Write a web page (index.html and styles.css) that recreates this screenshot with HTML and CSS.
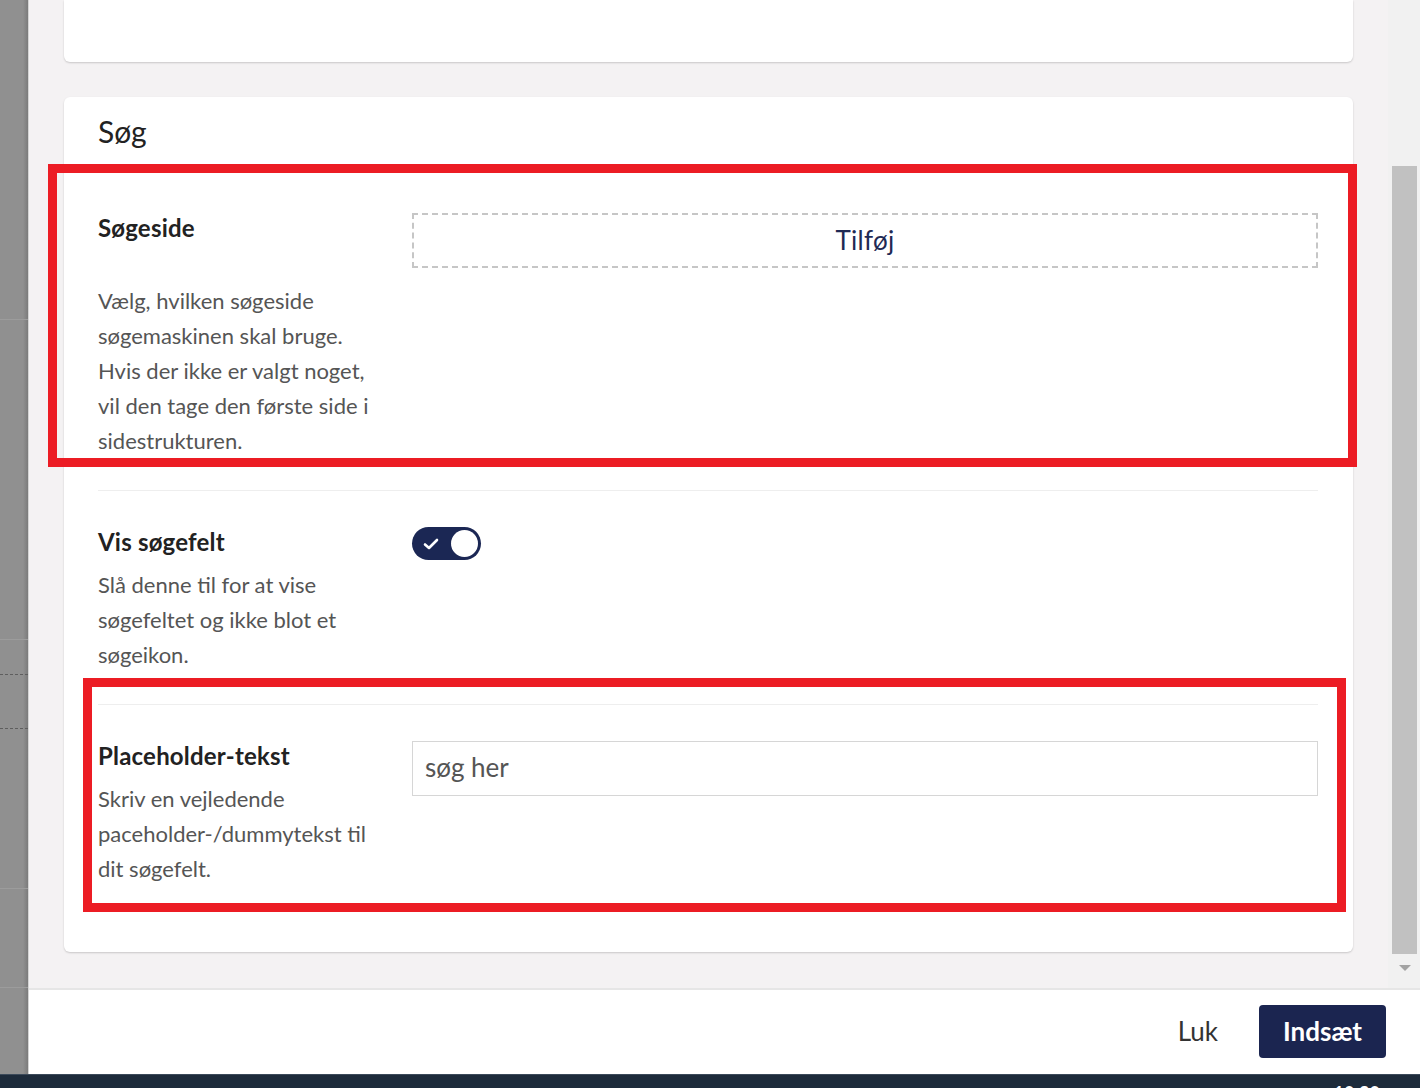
FILE: index.html
```html
<!DOCTYPE html>
<html lang="da">

<head>
    <meta charset="UTF-8">
    <meta name="viewport" content="width=device-width, initial-scale=1.0">
    <title>Søg – indstillinger</title>
    <link rel="stylesheet" href="styles.css">
</head>

<body>
    <div class="screen">
        <div class="backdrop">
            <div class="bd-block bd-1"></div>
            <div class="bd-block bd-2"></div>
            <div class="bd-block bd-3 dashed"></div>
            <div class="bd-block bd-4 dashed"></div>
            <div class="bd-block bd-5"></div>
            <div class="bd-block bd-6"></div>
        </div>

        <div class="modal">
            <div class="modal-body">
                <div class="scroll-area">
                    <div class="card card-top"></div>

                    <div class="card">
                        <h2>Søg</h2>

                        <div class="setting">
                            <div class="setting-info">
                                <div class="setting-label">Søgeside</div>
                                <p class="setting-help spaced">Vælg, hvilken søgeside søgemaskinen skal bruge. Hvis der ikke er valgt noget, vil den tage den første side i sidestrukturen.</p>
                            </div>
                            <div class="setting-control">
                                <button class="add-btn">Tilføj</button>
                            </div>
                        </div>

                        <div class="setting">
                            <div class="setting-info">
                                <div class="setting-label">Vis søgefelt</div>
                                <p class="setting-help">Slå denne til for at vise søgefeltet og ikke blot et søgeikon.</p>
                            </div>
                            <div class="setting-control">
                                <label class="toggle">
                                    <input type="checkbox" checked>
                                    <span class="toggle-track">
                                        <svg class="toggle-check" width="16" height="14" viewBox="0 0 16 14">
                                            <path d="M2 7.5 L6 11 L14 3" fill="none" stroke="#fff" stroke-width="2.6" stroke-linecap="round" stroke-linejoin="round"/>
                                        </svg>
                                        <span class="toggle-knob"></span>
                                    </span>
                                </label>
                            </div>
                        </div>

                        <div class="setting">
                            <div class="setting-info">
                                <div class="setting-label">Placeholder-tekst</div>
                                <p class="setting-help">Skriv en vejledende paceholder-/dummytekst til dit søgefelt.</p>
                            </div>
                            <div class="setting-control">
                                <input type="text" class="text-input" value="søg her">
                            </div>
                        </div>
                    </div>
                </div>

                <div class="scrollbar">
                    <div class="scroll-thumb"></div>
                    <div class="scroll-arrow"></div>
                </div>
            </div>

            <div class="modal-footer">
                <button class="btn-link">Luk</button>
                <button class="btn-primary">Indsæt</button>
            </div>
        </div>
    </div>

    <div class="taskbar">
        <span class="clock">10:30</span>
    </div>

    <!-- markeringer -->
    <div class="highlight highlight-1"></div>
    <div class="highlight highlight-2"></div>
</body>

</html>
```

FILE: styles.css
```css
body {
    margin: 0;
    height: 1088px;
    overflow: hidden;
    display: flex;
    flex-direction: column;
    font-family: Lato, "Open Sans", Arial, sans-serif;
    color: #222;
    position: relative;
}

.screen {
    flex: 1;
    display: flex;
    min-height: 0;
}

/* dimmed page behind the modal */
.backdrop {
    width: 28px;
    flex-shrink: 0;
    background: linear-gradient(to right, #909090 23px, #7b7b7b 28px);
    border-right: 1px solid #d4d4d4;
}

.bd-block {
    border-bottom: 1px solid #9c9c9c;
}

.bd-block.dashed {
    border-bottom: 1px dashed #5e5e5e;
}

.bd-1 { height: 319px; }
.bd-2 { height: 319px; }
.bd-3 { height: 34px; }
.bd-4 { height: 53px; }
.bd-5 { height: 159px; }
.bd-6 { height: 98px; }

.modal {
    flex: 1;
    display: flex;
    flex-direction: column;
    min-width: 0;
}

.modal-body {
    height: 988px;
    display: flex;
    background-color: #f4f2f3;
}

.scroll-area {
    flex: 1;
    padding: 0 35px;
    overflow: hidden;
}

.card {
    background-color: #fff;
    border-radius: 6px;
    box-shadow: 0 1px 2px rgba(0, 0, 0, 0.18);
    padding: 15px 35px 34px 34px;
    margin-top: 35px;
}

.card-top {
    height: 62px;
    padding: 0;
    margin-top: 0;
    border-radius: 0 0 6px 6px;
    box-sizing: border-box;
}

h2 {
    margin: 0 0 27px;
    font-size: 30px;
    line-height: 38px;
    font-weight: 400;
    color: #222;
}

.setting {
    display: grid;
    grid-template-columns: 314px 1fr;
    padding: 36px 0 32px;
    border-top: 1px solid #eeeeee;
}

.setting:first-of-type {
    border-top: none;
}

.setting-label {
    font-size: 24px;
    line-height: 30px;
    font-weight: 700;
    letter-spacing: 0.2px;
    color: #222;
}

.setting-help {
    margin: 10px 0 0;
    max-width: 286px;
    font-size: 22px;
    line-height: 35px;
    color: #555;
}

.setting-help.spaced {
    margin-top: 40px;
}

.add-btn {
    width: 100%;
    height: 55px;
    padding-bottom: 3px;
    background-color: #fff;
    border: 2px dashed #c6c6c6;
    font-family: inherit;
    font-size: 26px;
    letter-spacing: 0.3px;
    color: #1f2a55;
    cursor: pointer;
}

.toggle {
    display: inline-block;
    cursor: pointer;
}

.toggle input {
    display: none;
}

.toggle-track {
    position: relative;
    display: flex;
    align-items: center;
    width: 69px;
    height: 33px;
    border-radius: 17px;
    background-color: #1b2754;
}

.toggle-check {
    margin-left: 11px;
}

.toggle-knob {
    position: absolute;
    right: 3px;
    top: 3px;
    width: 27px;
    height: 27px;
    border-radius: 50%;
    background-color: #fff;
}

.text-input {
    width: 100%;
    height: 55px;
    box-sizing: border-box;
    border: 1px solid #d6d6d6;
    padding: 0 12px 3px;
    font-family: inherit;
    font-size: 26px;
    color: #555;
    outline: none;
}

.scrollbar {
    width: 32px;
    flex-shrink: 0;
    background-color: #f1f1f1;
    padding-left: 4px;
    box-sizing: border-box;
    display: flex;
    flex-direction: column;
}

.scroll-thumb {
    margin-top: 166px;
    width: 25px;
    height: 788px;
    background-color: #c1c1c1;
}

.scroll-arrow {
    margin: 11px 0 0 7px;
    width: 0;
    height: 0;
    border-left: 6px solid transparent;
    border-right: 6px solid transparent;
    border-top: 6px solid #a3a3a3;
}

.modal-footer {
    flex: 1;
    display: flex;
    justify-content: flex-end;
    align-items: center;
    padding: 0 34px 2px 0;
    background-color: #fff;
    border-top: 2px solid #e6e6e6;
}

.btn-link {
    background: none;
    border: none;
    padding: 0;
    margin-right: 41px;
    font-family: inherit;
    font-size: 26px;
    color: #333;
    cursor: pointer;
}

.btn-primary {
    height: 53px;
    padding: 0 24px;
    border: none;
    border-radius: 4px;
    background-color: #1b2550;
    color: #fff;
    font-family: inherit;
    font-size: 26px;
    font-weight: 700;
    cursor: pointer;
}

.taskbar {
    height: 13px;
    flex-shrink: 0;
    overflow: hidden;
    background-color: #1d2b3b;
    border-top: 1px solid #3c4a5a;
    display: flex;
    justify-content: flex-end;
    padding-right: 40px;
}

.clock {
    padding-top: 8px;
    font-size: 18px;
    line-height: 20px;
    font-weight: 700;
    color: #fff;
}

/* red annotation boxes */
.highlight {
    position: absolute;
    border: 9px solid #ec1c24;
    box-sizing: border-box;
    pointer-events: none;
}

.highlight-1 {
    left: 48px;
    top: 164px;
    width: 1309px;
    height: 303px;
}

.highlight-2 {
    left: 83px;
    top: 678px;
    width: 1263px;
    height: 234px;
}
```
